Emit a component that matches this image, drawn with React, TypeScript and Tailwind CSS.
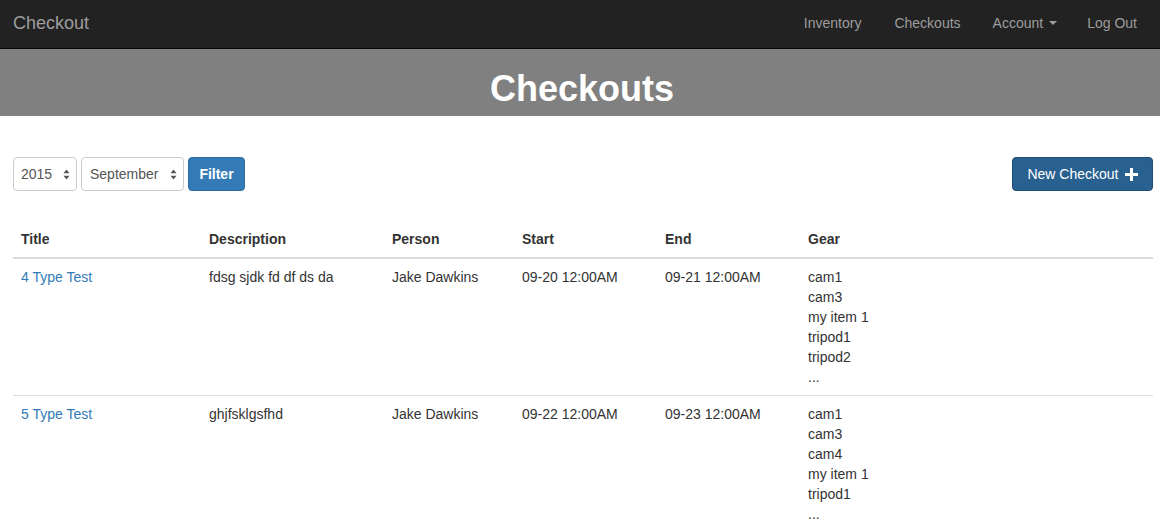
import React from "react";

const rows = [
  {
    title: "4 Type Test",
    desc: "fdsg sjdk fd df ds da",
    person: "Jake Dawkins",
    start: "09-20 12:00AM",
    end: "09-21 12:00AM",
    gear: ["cam1", "cam3", "my item 1", "tripod1", "tripod2", "..."],
  },
  {
    title: "5 Type Test",
    desc: "ghjfsklgsfhd",
    person: "Jake Dawkins",
    start: "09-22 12:00AM",
    end: "09-23 12:00AM",
    gear: ["cam1", "cam3", "cam4", "my item 1", "tripod1", "..."],
  },
];

function Arrows() {
  return (
    <svg width="7" height="11" viewBox="0 0 7 11" className="ml-auto">
      <path d="M3.5 0.5 L6.5 4.2 L0.5 4.2 Z" fill="#555" />
      <path d="M3.5 10.5 L6.5 6.8 L0.5 6.8 Z" fill="#555" />
    </svg>
  );
}

export default function App() {
  return (
    <div
      className="w-[1160px] h-[528px] overflow-hidden bg-white text-[14px] leading-[20px] text-[#333]"
      style={{ fontFamily: '"Liberation Sans", Arial, sans-serif' }}
    >
      <nav className="h-[49px] bg-[#222] border-b border-[#080808] flex items-center">
        <div className="pl-[13px] text-[18px] text-[#9d9d9d] -mt-[2px]">Checkout</div>
        <div className="ml-auto flex items-center text-[#9d9d9d] pr-[8px] -mt-[2px]">
          <span className="px-[15px] mr-[3px]">Inventory</span>
          <span className="px-[15px] mr-[2px]">Checkouts</span>
          <span className="px-[15px] flex items-center">
            Account
            <span className="ml-[6px] w-0 h-0 border-l-[4px] border-r-[4px] border-t-[4px] border-l-transparent border-r-transparent border-t-[#9d9d9d]" />
          </span>
          <span className="px-[15px]">Log Out</span>
        </div>
      </nav>
      <header className="h-[67px] bg-[#808080] flex items-center justify-center">
        <h1 className="text-[36px] font-bold text-white leading-none mt-[13px] ml-[4px]">Checkouts</h1>
      </header>
      <div className="pl-[13px] pr-[7px] pt-[41px]">
        <div className="flex items-center h-[34px]">
          <div className="w-[64px] h-[34px] border border-[#ccc] rounded-[4px] flex items-center pl-[7px] pr-[6px] text-[#555]">
            2015
            <Arrows />
          </div>
          <div className="ml-[4px] w-[103px] h-[34px] border border-[#ccc] rounded-[4px] flex items-center pl-[8px] pr-[6px] text-[#555]">
            September
            <Arrows />
          </div>
          <div className="ml-[4px] w-[57px] h-[34px] bg-[#337ab7] border border-[#2e6da4] rounded-[4px] flex items-center justify-center text-white font-bold">
            Filter
          </div>
          <div className="ml-auto w-[141px] h-[34px] bg-[#286090] border border-[#204d74] rounded-[4px] flex items-center justify-center text-white">
            New Checkout
            <svg width="13" height="13" viewBox="0 0 13 13" className="ml-[6px]">
              <path d="M5 0h3v5h5v3H8v5H5V8H0V5h5z" fill="#fff" />
            </svg>
          </div>
        </div>
        <table className="w-full mt-[30px] border-collapse table-fixed">
          <colgroup>
            <col className="w-[188px]" />
            <col className="w-[183px]" />
            <col className="w-[130px]" />
            <col className="w-[143px]" />
            <col className="w-[143px]" />
            <col />
          </colgroup>
          <thead>
            <tr className="border-b-2 border-[#ddd]">
              {["Title", "Description", "Person", "Start", "End", "Gear"].map((h) => (
                <th key={h} className="text-left font-bold p-[8px] align-bottom">
                  {h}
                </th>
              ))}
            </tr>
          </thead>
          <tbody>
            {rows.map((r) => (
              <tr key={r.title} className="border-b border-[#ddd] align-top">
                <td className="p-[8px] text-[#337ab7]">{r.title}</td>
                <td className="p-[8px]">{r.desc}</td>
                <td className="p-[8px]">{r.person}</td>
                <td className="p-[8px]">{r.start}</td>
                <td className="p-[8px]">{r.end}</td>
                <td className="p-[8px]">
                  {r.gear.map((g, i) => (
                    <div key={i}>{g}</div>
                  ))}
                </td>
              </tr>
            ))}
          </tbody>
        </table>
      </div>
    </div>
  );
}
